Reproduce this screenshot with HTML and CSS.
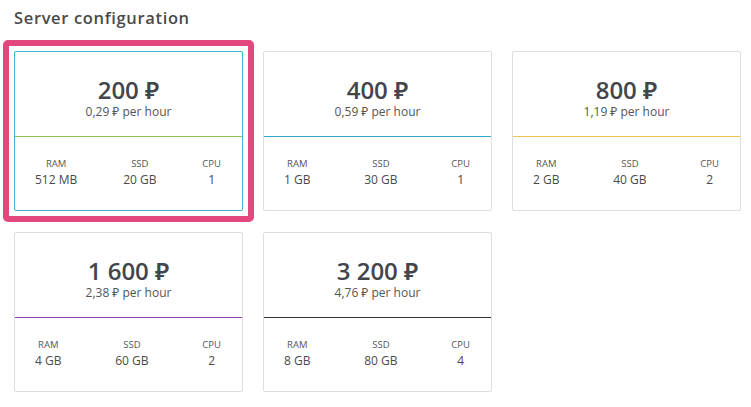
FILE: index.html
```html
<!DOCTYPE html>
<html lang="en">
<head>
<meta charset="utf-8">
<title>Server configuration</title>
<link rel="stylesheet" href="styles.css">
</head>
<body>
<div class="page">
  <h2 class="title">Server configuration</h2>
  <div class="grid">
    <div class="card selected line-green">
      <div class="card-top">
        <div class="price">200 ₽</div>
        <div class="hourly">0,29 ₽ per hour</div>
      </div>
      <div class="specs">
        <div class="spec"><div class="label">RAM</div><div class="value">512 MB</div></div>
        <div class="spec"><div class="label">SSD</div><div class="value">20 GB</div></div>
        <div class="spec"><div class="label">CPU</div><div class="value">1</div></div>
      </div>
    </div>
    <div class="card line-blue">
      <div class="card-top">
        <div class="price">400 ₽</div>
        <div class="hourly">0,59 ₽ per hour</div>
      </div>
      <div class="specs">
        <div class="spec"><div class="label">RAM</div><div class="value">1 GB</div></div>
        <div class="spec"><div class="label">SSD</div><div class="value">30 GB</div></div>
        <div class="spec"><div class="label">CPU</div><div class="value">1</div></div>
      </div>
    </div>
    <div class="card line-yellow">
      <div class="card-top">
        <div class="price">800 ₽</div>
        <div class="hourly">1,19 ₽ per hour</div>
      </div>
      <div class="specs">
        <div class="spec"><div class="label">RAM</div><div class="value">2 GB</div></div>
        <div class="spec"><div class="label">SSD</div><div class="value">40 GB</div></div>
        <div class="spec"><div class="label">CPU</div><div class="value">2</div></div>
      </div>
    </div>
    <div class="card line-purple">
      <div class="card-top">
        <div class="price">1 600 ₽</div>
        <div class="hourly">2,38 ₽ per hour</div>
      </div>
      <div class="specs">
        <div class="spec"><div class="label">RAM</div><div class="value">4 GB</div></div>
        <div class="spec"><div class="label">SSD</div><div class="value">60 GB</div></div>
        <div class="spec"><div class="label">CPU</div><div class="value">2</div></div>
      </div>
    </div>
    <div class="card line-dark">
      <div class="card-top">
        <div class="price">3 200 ₽</div>
        <div class="hourly">4,76 ₽ per hour</div>
      </div>
      <div class="specs">
        <div class="spec"><div class="label">RAM</div><div class="value">8 GB</div></div>
        <div class="spec"><div class="label">SSD</div><div class="value">80 GB</div></div>
        <div class="spec"><div class="label">CPU</div><div class="value">4</div></div>
      </div>
    </div>
  </div>
</div>
</body>
</html>
```
FILE: styles.css
```css
* { box-sizing: border-box; }
html, body { margin: 0; padding: 0; background: #fff; }
body {
  font-family: "Open Sans", "Noto Sans", sans-serif;
  color: #444;
}
.page {
  padding: 8px 14px 0 14px;
}
.title {
  margin: 0 0 23px 0;
  font-size: 16.5px;
  line-height: 20px;
  font-weight: 600;
  letter-spacing: 0.65px;
  color: #4a4a4a;
}
.grid {
  display: grid;
  grid-template-columns: repeat(3, 229px);
  column-gap: 20px;
  row-gap: 21px;
}
.card {
  position: relative;
  height: 160px;
  border: 1px solid #dedede;
  border-radius: 2px;
  background: #fff;
}
.card.selected {
  border-color: #3cb4cf;
}
.card.selected::after {
  content: "";
  position: absolute;
  top: -12px;
  left: -12px;
  right: -12px;
  bottom: -12px;
  border: 6px solid #e2487d;
  border-radius: 5px;
  pointer-events: none;
}
.card-top {
  padding-top: 23px;
  height: 85px;
  text-align: center;
  border-bottom: 1px solid #ddd;
}
.line-green .card-top { border-bottom-color: #8cc152; }
.line-blue .card-top { border-bottom-color: #36a9cc; }
.line-yellow .card-top { border-bottom-color: #f0c454; }
.line-purple .card-top { border-bottom-color: #8e44ad; }
.line-dark .card-top { border-bottom-color: #333; }
.price {
  font-size: 24px;
  line-height: 30px;
  font-weight: 600;
  color: #42464c;
}
.hourly {
  font-size: 12px;
  line-height: 14px;
  color: #555;
}
.specs {
  display: flex;
  justify-content: space-between;
  padding: 21px 21px 0 20px;
}
.spec {
  text-align: center;
}
.label {
  font-size: 9.5px;
  line-height: 12px;
  margin-bottom: 2px;
  color: #555;
}
.value {
  font-size: 12px;
  line-height: 16px;
  color: #4a4a4a;
}
```
